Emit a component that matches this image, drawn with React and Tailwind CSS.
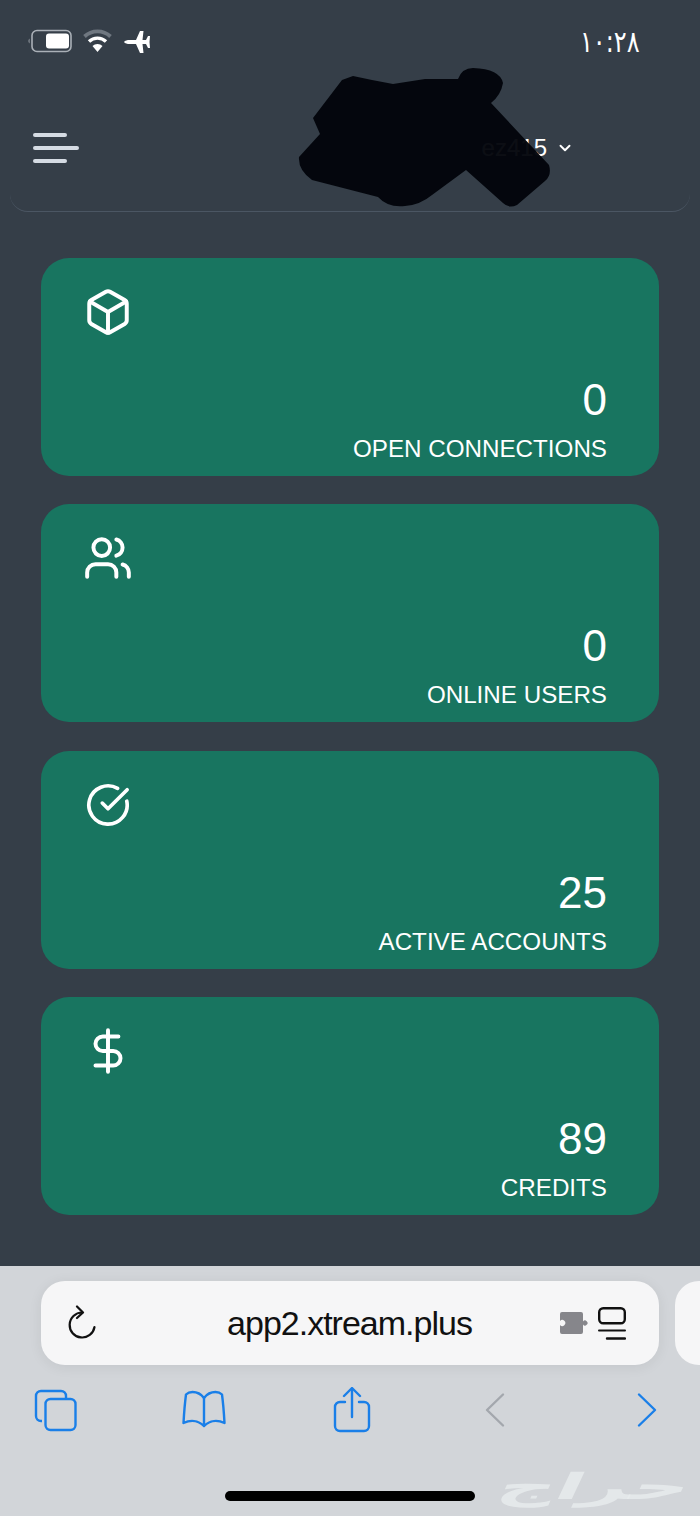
import { Box, Users, CircleCheckBig, DollarSign, ChevronDown } from "lucide-react";

const stats = [
  { icon: Box, size: 50, value: "0", label: "OPEN CONNECTIONS" },
  { icon: Users, size: 50, value: "0", label: "ONLINE USERS" },
  { icon: CircleCheckBig, size: 46, value: "25", label: "ACTIVE ACCOUNTS" },
  { icon: DollarSign, size: 50, value: "89", label: "CREDITS" },
];

const StatusIcons = () => (
  <svg width="126" height="28" viewBox="0 0 126 28" fill="none">
    {/* battery */}
    <path d="M3 10.5a3 3 0 0 0-2 2.5a3 3 0 0 0 2 2.5z" fill="#6b727b" />
    <rect x="5" y="2.5" width="39" height="21" rx="5" stroke="#aab0b7" strokeWidth="1.6" />
    <rect x="19" y="5.5" width="23" height="15" rx="3" fill="#ffffff" />
    {/* wifi */}
    <path d="M57.500 8.500a19 19 0 0 1 26 0" stroke="#6f7780" strokeWidth="3.8" />
    <path d="M62 13.500a12.500 12.500 0 0 1 17 0" stroke="#ffffff" strokeWidth="3.4" />
    <path d="M65.500 18a7 7 0 0 1 10 0l-5 6z" fill="#ffffff" />
    {/* plane */}
    <path
      d="M97 14C98 12.500 100 12 103 12H109L113 3H116.500L115.500 12H119L121 8H123L122.500 14L123 20H121L119 16H115.500L116.500 25H113L109 16H103C100 16 98 15.500 97 14Z"
      fill="#ffffff"
    />
  </svg>
);

const ReloadIcon = () => (
  <svg width="30" height="36" viewBox="0 0 30 36" fill="none" stroke="#111111" strokeWidth="2.2" strokeLinecap="round" strokeLinejoin="round">
    <path d="M16 7.500a12.500 12.500 0 1 0 12.500 14.500" />
    <path d="M11 1.500l6 6-6 5.500" />
  </svg>
);

const PuzzleIcon = () => (
  <svg width="29" height="24" viewBox="0 0 29 24">
    <path
      d="M3 1h19a2 2 0 0 1 2 2v7.500a2.500 2.500 0 1 1 0 3V21a2 2 0 0 1-2 2H3a2 2 0 0 1-2-2v-7a3 3 0 1 0 0-4V3a2 2 0 0 1 2-2z"
      fill="#86868b"
    />
  </svg>
);

const ReaderIcon = () => (
  <svg width="28" height="33" viewBox="0 0 28 33" fill="none" stroke="#111111" strokeLinecap="round">
    <rect x="1.200" y="1.200" width="25.600" height="15" rx="4" strokeWidth="2.400" />
    <path d="M1 23.500h26" strokeWidth="2" />
    <path d="M9 31.500h18" strokeWidth="2.400" />
  </svg>
);

const TabsIcon = () => (
  <svg width="44" height="44" viewBox="0 0 44 44" fill="none" stroke="#1a7fe8" strokeWidth="2.400" strokeLinejoin="round">
    <path d="M8 33h-1a5 5 0 0 1-5-5V8a5 5 0 0 1 5-5h20a5 5 0 0 1 5 5v3" />
    <rect x="11.500" y="11" width="30" height="31" rx="5" />
  </svg>
);

const BookIcon = () => (
  <svg width="44" height="40" viewBox="0 0 44 40" fill="none" stroke="#1a7fe8" strokeWidth="2.400" strokeLinecap="round" strokeLinejoin="round">
    <path d="M22 8C19 4 15 2 10.500 2C8 2 5.500 3 4 4.500C3 12 2 24 1.500 33C8 30 16 30 22 36C28 30 36 30 42.500 33C42 24 41 12 40 4.500C38.500 3 36 2 33.500 2C29 2 25 4 22 8Z" />
    <path d="M22 8V36" />
  </svg>
);

const ShareIcon = () => (
  <svg width="38" height="46" viewBox="0 0 38 46" fill="none" stroke="#1a7fe8" strokeWidth="2.400" strokeLinecap="round" strokeLinejoin="round">
    <path d="M12 15H7a5 5 0 0 0-5 5v19a5 5 0 0 0 5 5h24a5 5 0 0 0 5-5V20a5 5 0 0 0-5-5h-5" />
    <path d="M19 30V2" />
    <path d="M11 9l8-8 8 8" />
  </svg>
);

const Chevron = ({ dir, color }) => (
  <svg width="22" height="36" viewBox="0 0 22 36" fill="none" stroke={color} strokeWidth="2.400" strokeLinecap="round" strokeLinejoin="round">
    <path d={dir === "left" ? "M19 2.500L3 18l16 15.500" : "M3 2.500L19 18L3 33.500"} />
  </svg>
);

const StatCard = ({ icon: Icon, size, value, label }) => (
  <div className="h-[218px] rounded-[28px] bg-[#187560] pt-[29px] pl-[42px] pr-[52px] text-white">
    <div className="flex h-[50px] w-[50px] items-center justify-center">
      <Icon size={size} strokeWidth={1.9} />
    </div>
    <div className="mt-[39px] text-right text-[44px] leading-[48px]">{value}</div>
    <div className="mt-[9px] text-right text-[24.200px] leading-[32px]">{label}</div>
  </div>
);

export default function App() {
  return (
    <div className="relative flex h-[1516px] w-[700px] flex-col overflow-hidden bg-[#353e48] font-['Liberation_Sans',sans-serif]">
      {/* Status bar + nav */}
      <header className="mx-[10px] h-[212px] rounded-b-[18px] border-b border-[#4b5663]">
        <div className="flex items-center justify-between pt-[28px] pl-[17px] pr-[50px]">
          <StatusIcons />
          <span className="origin-right scale-x-[0.8] font-['DejaVu_Sans',sans-serif] text-[30px] leading-[28px] text-white">١٠:٢٨</span>
        </div>
        <div className="mt-[77px] flex items-center justify-between pl-[23px] pr-[116px]">
          <div className="flex w-[46px] flex-col gap-[9px]">
            <span className="h-[4px] w-[34px] rounded-full bg-[#d5dbe3]" />
            <span className="h-[4px] w-[46px] rounded-full bg-[#d5dbe3]" />
            <span className="h-[4px] w-[34px] rounded-full bg-[#d5dbe3]" />
          </div>
          <div className="flex items-center gap-[9px] text-[24px] leading-[30px] text-white">
            <span>ez415</span>
            <ChevronDown size={18} strokeWidth={2.600} />
          </div>
        </div>
      </header>

      {/* Scribble hiding the account name */}
      <svg className="absolute left-0 top-0" width="700" height="240" viewBox="0 0 700 240">
        <path
          d="M353 76 L372 80 L393 84 L425 79 L458 79 Q462 68 473 68 Q500 69 503 83 Q501 95 491 103 L549 165 Q552 175 545 181 L517 205 Q509 209 503 203 L466 170 L432 195 Q420 205 405 206 Q388 208 378 197 L312 180 Q298 170 299 157 L320 134 L313 118 L342 80 Z"
          fill="#02040a"
          fillOpacity="0.96"
        />
      </svg>

      {/* Stat cards */}
      <main className="flex flex-1 flex-col gap-[28.400px] px-[41px] pt-[46px]">
        {stats.map((stat) => (
          <StatCard key={stat.label} {...stat} />
        ))}
      </main>

      {/* Safari toolbar */}
      <footer className="relative h-[250px] overflow-hidden bg-[#d2d5d9]">
        <div className="flex pl-[41px] pt-[15px]">
          <div className="grid h-[84px] w-[618px] shrink-0 grid-cols-[1fr_auto_1fr] items-center rounded-[24px] bg-[#f6f6f7] pl-[25px] pr-[33px] shadow-[0_2px_14px_rgba(0,0,0,0.07)]">
            <div className="justify-self-start">
              <ReloadIcon />
            </div>
            <span className="ml-[7px] text-[34px] tracking-[-1px] text-[#111111]">app2.xtream.plus</span>
            <div className="flex items-center gap-[10px] justify-self-end">
              <PuzzleIcon />
              <ReaderIcon />
            </div>
          </div>
          <div className="ml-[16px] h-[84px] w-[100px] shrink-0 rounded-[24px] bg-[#f6f6f7]" />
        </div>
        <div className="mt-[22px] flex items-center justify-between pl-[34px] pr-[31px]">
          <div className="flex w-[44px] justify-center"><TabsIcon /></div>
          <div className="flex w-[44px] justify-center"><BookIcon /></div>
          <div className="flex w-[44px] justify-center"><ShareIcon /></div>
          <div className="flex w-[44px] justify-center pr-[8px]">
            <Chevron dir="left" color="#a3a7ad" />
          </div>
          <div className="flex w-[44px] justify-center">
            <Chevron dir="right" color="#1a7fe8" />
          </div>
        </div>
        <div className="absolute bottom-[15px] left-[225px] h-[10px] w-[250px] rounded-full bg-black" />
        <span className="absolute bottom-[8px] left-[490px] origin-bottom-left -skew-x-12 scale-x-[2.2] font-['DejaVu_Sans',sans-serif] text-[36px] font-bold leading-[42px] text-[#e9ecee]/80">
          حراج
        </span>
      </footer>
    </div>
  );
}
